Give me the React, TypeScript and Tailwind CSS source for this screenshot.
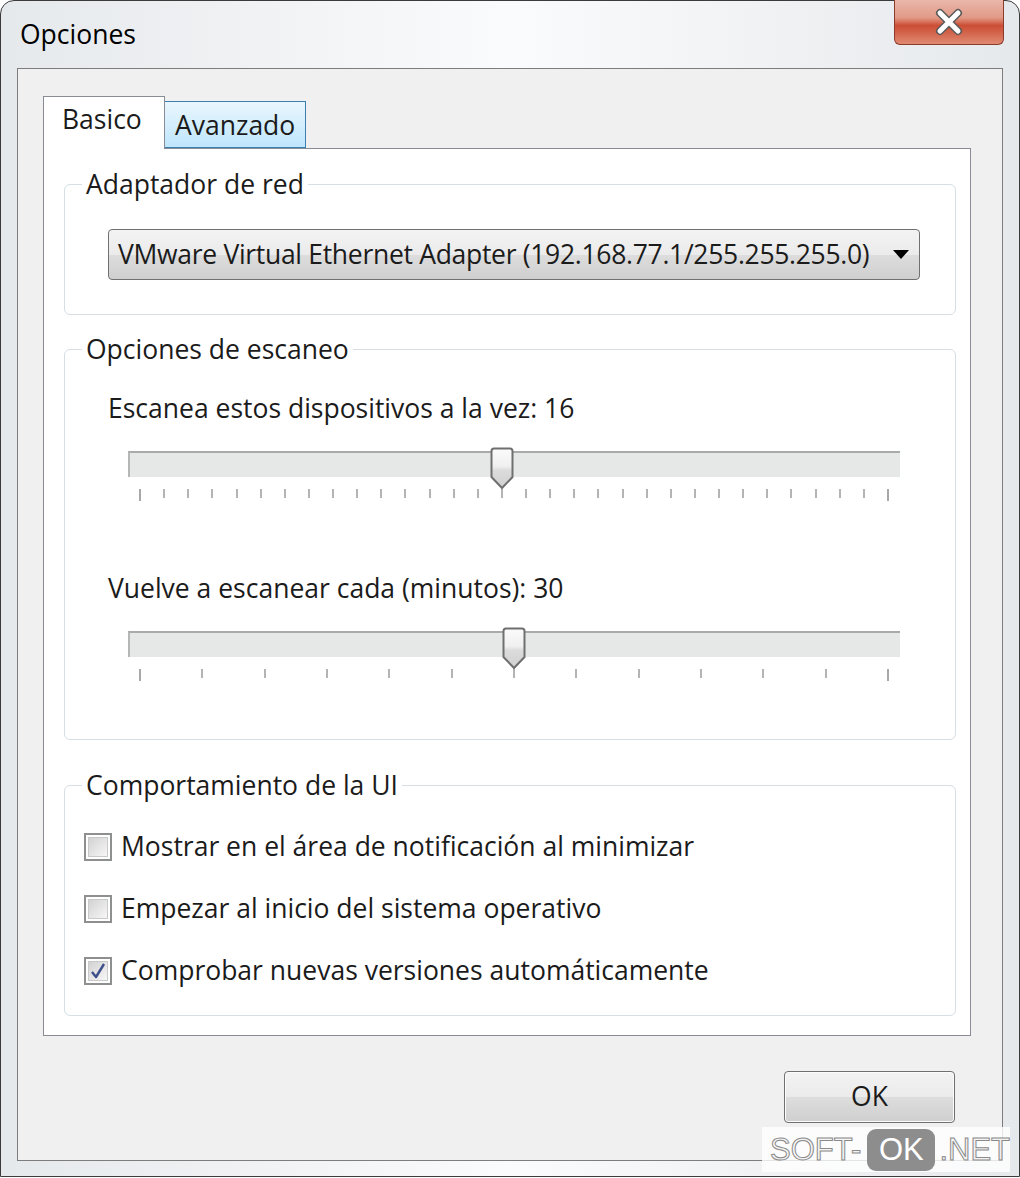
import React from 'react'

const font = { fontFamily: '"Open Sans", "Noto Sans", sans-serif' }

function GroupBox({ title, className, children }: { title: string; className?: string; children: React.ReactNode }) {
  return (
    <fieldset className={'border border-[#d5dfe5] rounded-[6px] ' + (className ?? '')}>
      <legend className="ml-[17px] px-[4px] leading-[34px]">{title}</legend>
      {children}
    </fieldset>
  )
}

function Thumb() {
  return (
    <svg width="24" height="43" viewBox="0 0 24 43">
      <defs>
        <linearGradient id="thumbFill" x1="0" y1="0" x2="0" y2="1">
          <stop offset="0" stopColor="#fbfbfb" />
          <stop offset="0.45" stopColor="#f0f0f0" />
          <stop offset="0.55" stopColor="#dcdcdc" />
          <stop offset="1" stopColor="#d0d0d0" />
        </linearGradient>
      </defs>
      <path d="M4 1.5 H20 Q22.5 1.5 22.5 4 V30 L12 41 L1.5 30 V4 Q1.5 1.5 4 1.5 Z" fill="url(#thumbFill)" stroke="#6f6f6f" strokeWidth="2" />
    </svg>
  )
}

function Slider({ ticks, index }: { ticks: number; index: number }) {
  const left = 12 + (748 * index) / (ticks - 1)
  return (
    <div className="relative w-[772px] h-[50px] ml-[20px] mt-[25px]">
      <div className="h-[26px] bg-[#e6e8e8] border-t-2 border-l-2 border-t-[#a9aaaa] border-l-[#b5b6b6]" />
      <div className="flex justify-between px-[11px] mt-[12px]">
        {Array.from({ length: ticks }).map((_, i) => (
          <div
            key={i}
            className={
              i === 0 || i === ticks - 1
                ? 'w-[2px] h-[12px] bg-[#a8a8a8]'
                : 'w-[2px] h-[9px] bg-[#b4b4b4]'
            }
          />
        ))}
      </div>
      <div className="absolute top-[-4px]" style={{ left: left - 12 }}>
        <Thumb />
      </div>
    </div>
  )
}

function CheckBox({ checked, label }: { checked?: boolean; label: string }) {
  return (
    <div className="flex items-center h-[36px]">
      <div className="w-[28px] h-[28px] border-2 border-[#8e8f8f] bg-white p-[2px] mr-[9px]">
        <div className="w-full h-full bg-gradient-to-br from-[#d2d2d2] to-[#f7f7f7] border border-[#c9c9c9] flex items-center justify-center">
          {checked && (
            <svg width="18" height="18" viewBox="0 0 18 18">
              <path d="M3 10 L7 15 L15 2" fill="none" stroke="#3d4f8a" strokeWidth="2.4" strokeLinejoin="round" />
            </svg>
          )}
        </div>
      </div>
      <span>{label}</span>
    </div>
  )
}

export default function App() {
  return (
    <div className="relative w-[1020px] h-[1178px] bg-white text-[26.5px] text-[#1b1b1b]" style={font}>
      <div className="h-[1177px] flex flex-col rounded-t-[14px] border border-[#3b3b3b] bg-gradient-to-r from-[#e6e9ec] via-[#fafbfc] to-[#e6e9ec]">
        {/* title bar */}
        <div className="h-[67px] flex justify-between pr-[15px]">
          <div className="pl-[19px] pt-[15px] leading-[36px] text-black">Opciones</div>
          <div className="w-[110px] h-[45px] -mt-px rounded-b-[6px] border border-t-0 border-[#8c3a2a] bg-[linear-gradient(to_bottom,#eab7aa_0%,#e19a87_40%,#cc4e35_58%,#d2654c_75%,#e08a72_100%)] flex items-center justify-center">
            <svg width="30" height="28" viewBox="0 0 30 28">
              <path d="M6 5 L24 23 M24 5 L6 23" stroke="#5a5a5a" strokeWidth="8" strokeLinecap="round" />
              <path d="M6 5 L24 23 M24 5 L6 23" stroke="#ffffff" strokeWidth="5" strokeLinecap="round" />
            </svg>
          </div>
        </div>

        {/* client area */}
        <div className="flex-1 mx-[16px] mb-[15px] border border-[#7d7d7d] bg-[#f0f0f0] flex flex-col pl-[25px] pt-[27px]">
          {/* tabs */}
          <div className="flex items-end h-[52px]">
            <div className="relative z-10 -mb-px w-[122px] h-[53px] bg-white border border-b-0 border-[#898c95] pl-[18px] leading-[44px]">
              Basico
            </div>
            <div className="w-[142px] h-[47px] -ml-px border border-[#3c7fb1] bg-gradient-to-b from-[#eaf6fd] to-[#bee6fd] pl-[10px] leading-[46px]">
              Avanzado
            </div>
          </div>
          <div className="w-[928px] h-[888px] bg-white border border-[#898c95] pl-[20px] pr-[14px] pt-[18px]">
            <GroupBox title="Adaptador de red" className="h-[148px]">
              <div className="ml-[43px] mr-[35px] mt-[28px] h-[51px] rounded-[4px] border border-[#707070] bg-[linear-gradient(to_bottom,#f3f3f3_0%,#ebebeb_50%,#dddddd_51%,#cfcfcf_100%)] flex items-center justify-between pl-[9px] pr-[10px]">
                <span className="whitespace-nowrap tracking-[-0.3px]">VMware Virtual Ethernet Adapter (192.168.77.1/255.255.255.0)</span>
                <svg width="16" height="9" viewBox="0 0 16 9" className="shrink-0">
                  <path d="M0 0 H16 L8 9 Z" fill="#000" />
                </svg>
              </div>
            </GroupBox>

            <GroupBox title="Opciones de escaneo" className="mt-[17px] h-[408px]">
              <div className="pl-[43px] pt-[24px]">
                <div className="leading-[36px]">Escanea estos dispositivos a la vez: 16</div>
                <Slider ticks={32} index={15} />
                <div className="leading-[36px] mt-[69px]">Vuelve a escanear cada (minutos): 30</div>
                <Slider ticks={13} index={6} />
              </div>
            </GroupBox>

            <GroupBox title="Comportamiento de la UI" className="mt-[28px] h-[248px]">
              <div className="pl-[19px] pt-[27px] flex flex-col gap-[26px]">
                <CheckBox label="Mostrar en el área de notificación al minimizar" />
                <CheckBox label="Empezar al inicio del sistema operativo" />
                <CheckBox checked label="Comprobar nuevas versiones automáticamente" />
              </div>
            </GroupBox>
          </div>

          <div className="flex justify-end pr-[47px] pt-[35px]">
            <button className="w-[171px] h-[52px] rounded-[4px] border border-[#707070] bg-[linear-gradient(to_bottom,#f3f3f3_0%,#ebebeb_50%,#dddddd_51%,#cfcfcf_100%)] shadow-[inset_0_0_0_1px_#fcfcfc]">
              OK
            </button>
          </div>
        </div>
      </div>

      {/* watermark */}
      <div
        className="absolute left-[762px] top-[1127px] w-[248px] h-[45px] bg-white/80 flex items-center pl-[8px] text-[31px] leading-none text-[#f4f4f4] [-webkit-text-stroke:1px_#8a8a8a]"
        style={{ fontFamily: '"Liberation Sans", Arial, sans-serif' }}
      >
        <span>SOFT-</span>
        <span className="ml-[6px] w-[70px] h-[42px] flex items-center justify-center rounded-[9px] bg-[#8d8d8d] text-white [-webkit-text-stroke:0px]">OK</span>
        <span className="ml-[4px]">.NET</span>
      </div>
    </div>
  )
}
